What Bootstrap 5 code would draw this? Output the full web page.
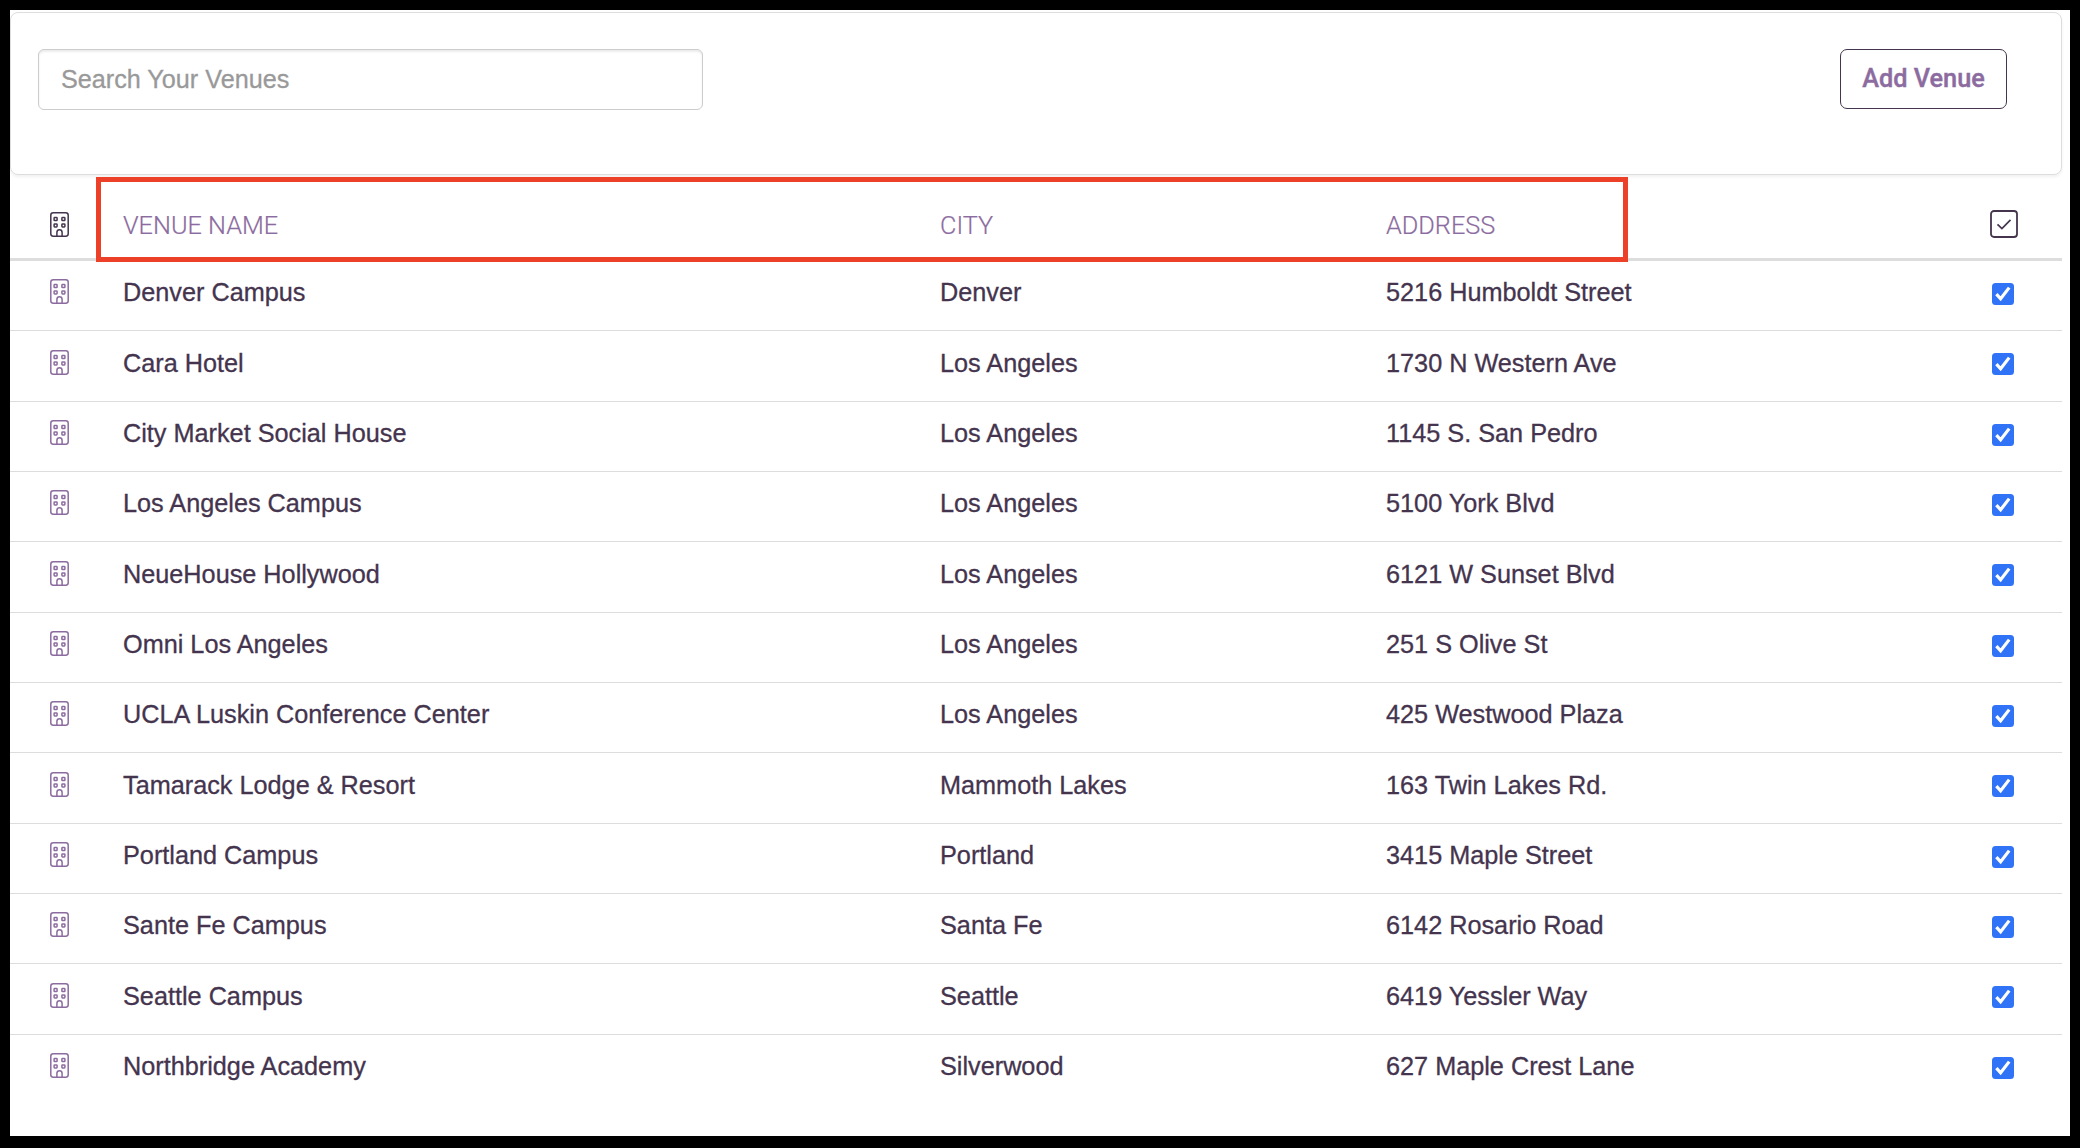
<!DOCTYPE html>
<html lang="en">
<head>
<meta charset="utf-8">
<title>Venues</title>
<meta name="viewport" content="width=device-width, initial-scale=1">
<link href="https://cdn.jsdelivr.net/npm/bootstrap@5.3.0/dist/css/bootstrap.min.css" rel="stylesheet">
<style>
body{background:#000;font-family:"Liberation Sans",Arial,sans-serif;font-size:25.25px;line-height:36px;color:#44344e;height:1148px;overflow:hidden}
.frame{margin:10px 10px 0;height:1126px;background:#fff;padding:2px 8px 0 0}
.toolbar{height:163px;border:1px solid #ddd;border-radius:8px;box-shadow:0 2px 3px rgba(0,0,0,.06);padding:36px 54px 0 27px}
.search{width:665px;height:61px;border:1px solid #ccc;border-radius:6px;font-size:25.2px;padding:0 22px 1px;color:#44344e;box-shadow:inset 0 2px 2px rgba(0,0,0,.08)}
.search::placeholder{color:#999;-webkit-text-stroke:.3px #999}
.add-btn{width:167px;height:60px;border:1px solid #44344e;border-radius:7px;font:500 25.3px/36px Roboto,sans-serif;color:#8c6ca0;padding:0 0 1px;-webkit-text-stroke:.4px #8c6ca0}
.venue-row{height:70.35px;border-bottom:1px solid #ddd;padding-top:13.3px;-webkit-text-stroke:.3px #44344e}
.venue-row:last-child{border-bottom:0}
.head-row{position:relative;height:86px;border-bottom:3px solid #ddd;padding-top:33px;font-family:Roboto,sans-serif;font-weight:300;color:#8c6ca0;-webkit-text-stroke:.2px #8c6ca0}
.c-icon{width:113px;padding-left:40px;color:#8c6ca0}
.head-row .c-icon,.c-check{color:#44344e}
.c-name{width:817px}.c-city{width:446px}.c-addr{width:540px}
.c-icon svg,.c-check svg{display:block}
.venue-row .c-icon{padding-top:5px}
.venue-row .c-check{padding:8.7px 0 0 66px}
.head-row .c-icon{padding-top:4px}
.head-row .c-check{padding:2px 0 0 64px}
.marker{position:absolute;left:86px;top:2px;width:1532px;height:85px;border:5px solid #ec4128}
</style>
<script src="https://cdn.jsdelivr.net/npm/bootstrap@5.3.0/dist/js/bootstrap.bundle.min.js"></script>
</head>
<body>
<svg class="d-none">
<symbol id="building" viewBox="0 0 19 25"><g fill="none" stroke="currentColor" stroke-width="1.5"><rect x=".8" y=".8" width="17.4" height="23.4" rx="2.4"/><rect x="4.1" y="5.6" width="3" height="3" rx=".6"/><rect x="11.9" y="5.6" width="3" height="3" rx=".6"/><rect x="4.1" y="11.9" width="3" height="3" rx=".6"/><rect x="11.9" y="11.9" width="3" height="3" rx=".6"/><path d="M6.9 24v-3.6a2.6 2.6 0 0 1 5.2 0V24"/></g></symbol>
<symbol id="checked" viewBox="0 0 22 22"><rect width="22" height="22" rx="3.5" fill="#3073f6"/><path d="M4.4 11.2l4.2 4.6L17.2 4.6" fill="none" stroke="#fff" stroke-width="3.2"/></symbol>
</svg>
<main class="frame">
<div class="toolbar d-flex justify-content-between align-items-start">
<input class="search form-control" type="text" placeholder="Search Your Venues">
<button class="add-btn btn" type="button">Add Venue</button>
</div>
<div class="head-row d-flex">
<div class="c-icon"><svg width="19" height="25"><use href="#building"/></svg></div>
<div class="c-name">VENUE NAME</div><div class="c-city">CITY</div><div class="c-addr">ADDRESS</div>
<div class="c-check"><svg width="28" height="28" viewBox="0 0 28 28" fill="none" stroke="currentColor"><rect x="1" y="1" width="26" height="26" rx="3" stroke-width="1.8"/><path d="M7.5 14.3l4.4 4.2 8.6-8.6" stroke-width="1.7"/></svg></div>
<div class="marker"></div>
</div>
<div id="venues"></div>
</main>
<script>
const venues = [
["Denver Campus","Denver","5216 Humboldt Street"],
["Cara Hotel","Los Angeles","1730 N Western Ave"],
["City Market Social House","Los Angeles","1145 S. San Pedro"],
["Los Angeles Campus","Los Angeles","5100 York Blvd"],
["NeueHouse Hollywood","Los Angeles","6121 W Sunset Blvd"],
["Omni Los Angeles","Los Angeles","251 S Olive St"],
["UCLA Luskin Conference Center","Los Angeles","425 Westwood Plaza"],
["Tamarack Lodge &amp; Resort","Mammoth Lakes","163 Twin Lakes Rd."],
["Portland Campus","Portland","3415 Maple Street"],
["Sante Fe Campus","Santa Fe","6142 Rosario Road"],
["Seattle Campus","Seattle","6419 Yessler Way"],
["Northbridge Academy","Silverwood","627 Maple Crest Lane"]];
document.getElementById("venues").innerHTML = venues.map(v =>
`<div class="venue-row d-flex"><div class="c-icon"><svg width="19" height="25"><use href="#building"/></svg></div><div class="c-name">${v[0]}</div><div class="c-city">${v[1]}</div><div class="c-addr">${v[2]}</div><div class="c-check"><svg width="22" height="22"><use href="#checked"/></svg></div></div>`).join("");
</script>
</body>
</html>
